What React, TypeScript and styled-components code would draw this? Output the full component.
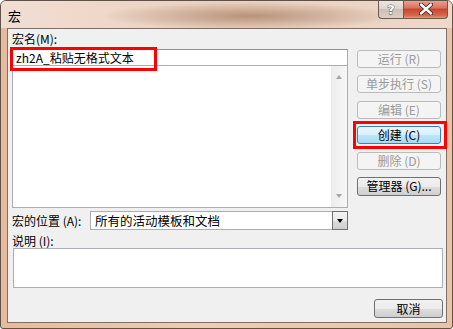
import React from 'react';
import styled, { createGlobalStyle, css } from 'styled-components';

const FONT = `"Noto Sans CJK SC", "Noto Sans", sans-serif`;

const Global = createGlobalStyle`
  html, body { margin: 0; padding: 0; background: #ffffff; }
  body { font-family: ${FONT}; font-size: 12px; color: #000; }
  #root { width: 453px; height: 329px; }
`;

const Window = styled.div`
  width: 453px;
  height: 329px;
  box-sizing: border-box;
  border: 1px solid #5f524b;
  border-radius: 6px 6px 3px 3px;
  background: linear-gradient(to right, #e6bb9b, #efcdb2 45%, #e9c3a6);
  display: flex;
  flex-direction: column;
  overflow: hidden;
`;

const TitleBar = styled.div`
  height: 27px;
  flex: none;
  display: flex;
  align-items: flex-start;
  padding-left: 7px;
  background:
    radial-gradient(ellipse 150px 14px at 250px 15px, rgba(150, 105, 75, 0.6), rgba(150, 105, 75, 0) 100%),
    linear-gradient(to right, #f1ded3, #ead0bd 50%, #eed8ca);
`;

const Title = styled.div`
  font-size: 13px;
  line-height: 15px;
  margin-top: 7px;
  color: #000;
`;

const Spacer = styled.div`
  flex: 1;
`;

const CaptionGroup = styled.div`
  display: flex;
  margin-top: -1px;
  margin-right: 4px;
`;

const CaptionBtn = styled.div<{ $kind: 'help' | 'close' }>`
  box-sizing: border-box;
  height: 19px;
  display: flex;
  align-items: center;
  justify-content: center;
  border: 1px solid #6d5a50;
  border-top: none;
  ${(p) =>
    p.$kind === 'help'
      ? css`
          width: 25px;
          border-radius: 0 0 0 4px;
          border-right: none;
          background: linear-gradient(#eee8e3, #ddd3cc 50%, #cdbfb5 51%, #dbcfc6);
        `
      : css`
          width: 45px;
          border-radius: 0 0 4px 0;
          background: linear-gradient(#e9a99b, #d8715e 45%, #c6452d 50%, #d6664c 85%, #e7957f);
        `}
`;

const Body = styled.div`
  flex: 1;
  display: flex;
  padding: 0 7px 5px 6px;
  min-height: 0;
`;

const Client = styled.div`
  flex: 1;
  border: 1px solid #7d6f68;
  background: #f0f0f0;
  display: flex;
  flex-direction: column;
  padding: 2px 3px 0 4px;
`;

const TopRow = styled.div`
  display: grid;
  grid-template-columns: 336px 84px;
  column-gap: 9px;
  height: 177px;
`;

const LeftCol = styled.div`
  position: relative;
  display: flex;
  flex-direction: column;
`;

const Label = styled.div`
  line-height: 15px;
  height: 15px;
  white-space: nowrap;
`;

const TextField = styled.div`
  box-sizing: border-box;
  height: 17px;
  margin-top: 3px;
  border: 1px solid #abadb3;
  border-top-color: #8e9297;
  background: #fff;
  padding-left: 3px;
  line-height: 15px;
  white-space: nowrap;
  position: relative;
  z-index: 1;
`;

const ListBox = styled.div`
  box-sizing: border-box;
  flex: 1;
  margin-top: -1px;
  border: 1px solid #abadb3;
  background: #fff;
  display: flex;
  justify-content: flex-end;
`;

const ScrollBar = styled.div`
  width: 16px;
  background: linear-gradient(to right, #ececec, #f7f7f7);
  display: flex;
  flex-direction: column;
  justify-content: space-between;
  align-items: center;
  padding: 9px 0 9px;
`;

const Arrow = styled.div<{ $dir: 'up' | 'down'; $color?: string }>`
  width: 0;
  height: 0;
  border-left: 3.5px solid transparent;
  border-right: 3.5px solid transparent;
  ${(p) =>
    p.$dir === 'up'
      ? css`border-bottom: 4px solid ${p.$color || '#a6a6a6'};`
      : css`border-top: 4px solid ${p.$color || '#a6a6a6'};`}
`;

const RedBox = styled.div`
  position: absolute;
  box-sizing: border-box;
  border: 3px solid #ff0000;
  pointer-events: none;
  z-index: 2;
`;

const NameRedBox = styled(RedBox)`
  left: -2px;
  top: 16px;
  width: 147px;
  height: 24px;
`;

const ButtonCol = styled.div`
  display: flex;
  flex-direction: column;
  gap: 7.4px;
  padding-top: 19px;
`;

const BtnWrap = styled.div`
  position: relative;
`;

const BtnRedBox = styled(RedBox)`
  left: -4px;
  right: -6px;
  top: -5px;
  bottom: -5px;
`;

type Variant = 'normal' | 'disabled' | 'focus';

const Btn = styled.div<{ $variant?: Variant; $w?: number; $h?: number }>`
  box-sizing: border-box;
  width: ${(p) => p.$w ?? 84}px;
  height: ${(p) => p.$h ?? 18}px;
  border-radius: 3px;
  display: flex;
  align-items: center;
  justify-content: center;
  font-size: 12px;
  line-height: 14px;
  white-space: nowrap;
  ${(p) =>
    p.$variant === 'disabled'
      ? css`
          border: 1px solid #b8bcbf;
          background: #f4f4f4;
          color: #9a9a9a;
        `
      : p.$variant === 'focus'
      ? css`
          border: 1px solid #3c7fb1;
          background: linear-gradient(#eaf6fd, #d9f0fc 50%, #bee6fd 51%, #a7d9f5);
          color: #000;
        `
      : css`
          border: 1px solid #707070;
          background: linear-gradient(#f2f2f2, #ebebeb 50%, #dddddd 51%, #cfcfcf);
          color: #000;
        `}
`;

const LocationRow = styled.div`
  display: flex;
  align-items: center;
  margin-top: 3px;
  height: 19px;
`;

const LocLabel = styled(Label)`
  width: 78px;
`;

const Select = styled.div`
  box-sizing: border-box;
  width: 258px;
  height: 19px;
  border: 1px solid #abadb3;
  background: #fff;
  display: flex;
  align-items: stretch;
`;

const SelectText = styled.div`
  flex: 1;
  padding-left: 4px;
  line-height: 17px;
  font-size: 12.5px;
  white-space: nowrap;
`;

const SelectBtn = styled.div`
  box-sizing: border-box;
  width: 16px;
  margin: -1px -1px -1px 0;
  border: 1px solid #707070;
  background: linear-gradient(#f2f2f2, #ebebeb 50%, #dddddd 51%, #cfcfcf);
  display: flex;
  align-items: center;
  justify-content: center;
`;

const DescLabel = styled(Label)`
  margin-top: 3px;
`;

const DescBox = styled.div`
  box-sizing: border-box;
  width: 430px;
  height: 40px;
  margin-left: 1px;
  border: 1px solid #abadb3;
  background: #fff;
`;

const Footer = styled.div`
  display: flex;
  justify-content: flex-end;
  margin-top: 11px;
`;

const HelpGlyph = () => (
  <svg width="12" height="13" viewBox="0 0 12 13">
    <text
      x="6"
      y="11"
      textAnchor="middle"
      fontSize="13"
      fontWeight="bold"
      fontFamily="DejaVu Sans, sans-serif"
      fill="#ffffff"
      stroke="#55504c"
      strokeWidth="0.9"
      paintOrder="stroke"
    >
      ?
    </text>
  </svg>
);

const CloseGlyph = () => (
  <svg width="14" height="12" viewBox="0 0 14 12">
    <path
      d="M2 1.5 L12 10.5 M12 1.5 L2 10.5"
      stroke="#3c2a26"
      strokeWidth="4.2"
      strokeLinecap="round"
    />
    <path
      d="M2 1.5 L12 10.5 M12 1.5 L2 10.5"
      stroke="#ffffff"
      strokeWidth="2.4"
      strokeLinecap="round"
    />
  </svg>
);

export default function App() {
  return (
    <>
      <Global />
      <Window>
        <TitleBar>
          <Title>宏</Title>
          <Spacer />
          <CaptionGroup>
            <CaptionBtn $kind="help">
              <HelpGlyph />
            </CaptionBtn>
            <CaptionBtn $kind="close">
              <CloseGlyph />
            </CaptionBtn>
          </CaptionGroup>
        </TitleBar>
        <Body>
          <Client>
            <TopRow>
              <LeftCol>
                <Label>宏名(M):</Label>
                <TextField>zh2A_粘贴无格式文本</TextField>
                <ListBox>
                  <ScrollBar>
                    <Arrow $dir="up" />
                    <Arrow $dir="down" />
                  </ScrollBar>
                </ListBox>
                <NameRedBox />
              </LeftCol>
              <ButtonCol>
                <Btn $variant="disabled">运行 (R)</Btn>
                <Btn $variant="disabled">单步执行 (S)</Btn>
                <Btn $variant="disabled">编辑 (E)</Btn>
                <BtnWrap>
                  <Btn $variant="focus">创建 (C)</Btn>
                  <BtnRedBox />
                </BtnWrap>
                <Btn $variant="disabled">删除 (D)</Btn>
                <Btn $variant="normal" $h={19}>管理器 (G)...</Btn>
              </ButtonCol>
            </TopRow>
            <LocationRow>
              <LocLabel>宏的位置 (A):</LocLabel>
              <Select>
                <SelectText>所有的活动模板和文档</SelectText>
                <SelectBtn>
                  <Arrow $dir="down" $color="#000" />
                </SelectBtn>
              </Select>
            </LocationRow>
            <DescLabel>说明 (I):</DescLabel>
            <DescBox />
            <Footer>
              <Btn $variant="normal" $w={69} $h={19}>取消</Btn>
            </Footer>
          </Client>
        </Body>
      </Window>
    </>
  );
}
